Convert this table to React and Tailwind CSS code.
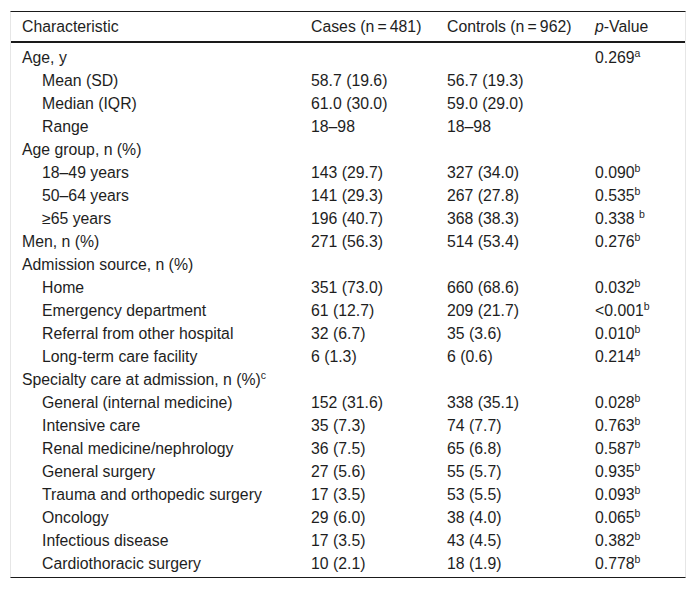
import React from 'react';

const rows = [
  { label: 'Age, y', p: '0.269', sup: 'a' },
  { label: 'Mean (SD)', sub: true, cases: '58.7 (19.6)', controls: '56.7 (19.3)' },
  { label: 'Median (IQR)', sub: true, cases: '61.0 (30.0)', controls: '59.0 (29.0)' },
  { label: 'Range', sub: true, cases: '18–98', controls: '18–98' },
  { label: 'Age group, n (%)' },
  { label: '18–49 years', sub: true, cases: '143 (29.7)', controls: '327 (34.0)', p: '0.090', sup: 'b' },
  { label: '50–64 years', sub: true, cases: '141 (29.3)', controls: '267 (27.8)', p: '0.535', sup: 'b' },
  { label: '≥65 years', sub: true, cases: '196 (40.7)', controls: '368 (38.3)', p: '0.338 ', sup: 'b' },
  { label: 'Men, n (%)', cases: '271 (56.3)', controls: '514 (53.4)', p: '0.276', sup: 'b' },
  { label: 'Admission source, n (%)' },
  { label: 'Home', sub: true, cases: '351 (73.0)', controls: '660 (68.6)', p: '0.032', sup: 'b' },
  { label: 'Emergency department', sub: true, cases: '61 (12.7)', controls: '209 (21.7)', p: '<0.001', sup: 'b' },
  { label: 'Referral from other hospital', sub: true, cases: '32 (6.7)', controls: '35 (3.6)', p: '0.010', sup: 'b' },
  { label: 'Long-term care facility', sub: true, cases: '6 (1.3)', controls: '6 (0.6)', p: '0.214', sup: 'b' },
  { label: 'Specialty care at admission, n (%)', labelSup: 'c' },
  { label: 'General (internal medicine)', sub: true, cases: '152 (31.6)', controls: '338 (35.1)', p: '0.028', sup: 'b' },
  { label: 'Intensive care', sub: true, cases: '35 (7.3)', controls: '74 (7.7)', p: '0.763', sup: 'b' },
  { label: 'Renal medicine/nephrology', sub: true, cases: '36 (7.5)', controls: '65 (6.8)', p: '0.587', sup: 'b' },
  { label: 'General surgery', sub: true, cases: '27 (5.6)', controls: '55 (5.7)', p: '0.935', sup: 'b' },
  { label: 'Trauma and orthopedic surgery', sub: true, cases: '17 (3.5)', controls: '53 (5.5)', p: '0.093', sup: 'b' },
  { label: 'Oncology', sub: true, cases: '29 (6.0)', controls: '38 (4.0)', p: '0.065', sup: 'b' },
  { label: 'Infectious disease', sub: true, cases: '17 (3.5)', controls: '43 (4.5)', p: '0.382', sup: 'b' },
  { label: 'Cardiothoracic surgery', sub: true, cases: '10 (2.1)', controls: '18 (1.9)', p: '0.778', sup: 'b' },
];

function Sup({ children }) {
  return <sup className="text-[10.5px] -top-[6px]">{children}</sup>;
}

export default function App() {
  return (
    <div className="min-h-screen bg-white pl-[10px] pt-[11px] text-[#1e1e1e] text-[15.8px]" style={{ fontFamily: '"Liberation Sans", Arial, sans-serif' }}>
      <div className="w-[676px] border-x border-[#e6e6e6] border-t border-t-[#1a1a1a] border-b border-b-[#1a1a1a] pb-[2px]">
        {/* header */}
        <div className="grid grid-cols-[289px_136px_148px_1fr] h-[31px] items-center border-b-2 border-[#1a1a1a]">
          <div className="pl-[11px]">Characteristic</div>
          <div className="pl-[11px] whitespace-nowrap">Cases (n{'\u2009'}={'\u2009'}481)</div>
          <div className="pl-[11px] whitespace-nowrap">Controls (n{'\u2009'}={'\u2009'}962)</div>
          <div className="pl-[11px]"><i>p</i>-Value</div>
        </div>

        {/* body */}
        <div className="pt-[3px]">
          {rows.map((r, i) => (
            <div key={i} className="grid grid-cols-[289px_136px_148px_1fr] h-[23px] items-center leading-[23px]">
              <div className={r.sub ? 'pl-[31px] whitespace-nowrap' : 'pl-[11px] whitespace-nowrap'}>
                {r.label}
                {r.labelSup && <Sup>{r.labelSup}</Sup>}
              </div>
              <div className="pl-[11px]">{r.cases}</div>
              <div className="pl-[11px]">{r.controls}</div>
              <div className="pl-[11px] whitespace-pre">
                {r.p}
                {r.sup && <Sup>{r.sup}</Sup>}
              </div>
            </div>
          ))}
        </div>
      </div>
    </div>
  );
}
